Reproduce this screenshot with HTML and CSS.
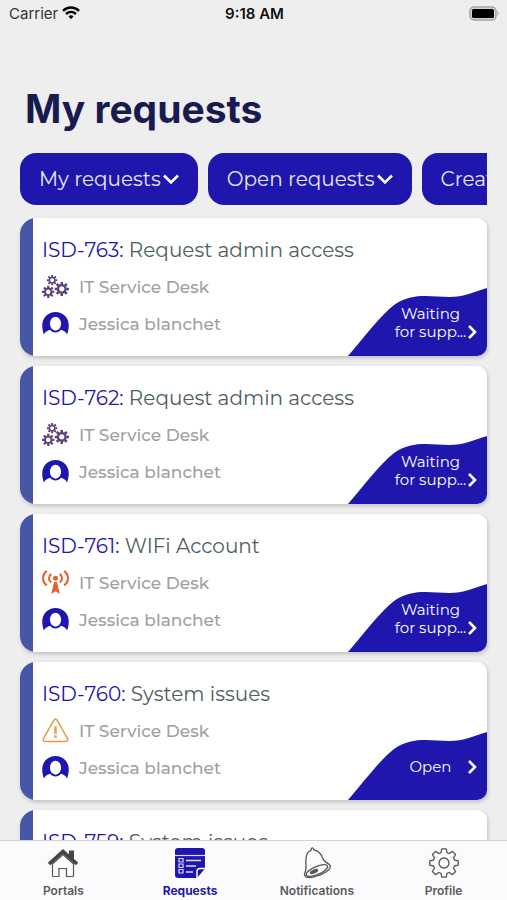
FILE: index.html
```html
<!DOCTYPE html>
<html lang="en">
<head>
<meta charset="utf-8">
<meta name="viewport" content="width=device-width, initial-scale=1">
<title>My requests</title>
<link rel="stylesheet" href="styles.css">
</head>
<body>
<svg class="sprite" aria-hidden="true">
  <symbol id="cog" viewBox="-8 -8 16 16">
    <circle r="4.2" fill="none" stroke="currentColor" stroke-width="2.6"/>
    <path d="M0-8V-5M0 5V8M-8 0H-5M5 0H8M-5.600-5.600-3.500-3.500M5.600 5.600 3.500 3.500M-5.600 5.600-3.500 3.500M5.600-5.600 3.500-3.500" stroke="currentColor" stroke-width="2.800"/>
  </symbol>
  <symbol id="cogs" viewBox="0 0 28 24">
    <use href="#cog" x="5" y="0" width="11" height="11"/>
    <use href="#cog" x="0" y="11" width="13" height="13"/>
    <use href="#cog" x="13" y="7" width="15" height="15"/>
  </symbol>
  <symbol id="antenna" viewBox="0 0 28 26">
    <circle cx="14" cy="8.500" r="2.600" fill="currentColor"/>
    <path d="M12.500 12.500H15.500L18.500 25 14 22 9.500 25Z" fill="currentColor"/>
    <path d="M9.500 4C6.500 6.500 6.500 10.500 9.500 13M18.500 4C21.500 6.500 21.500 10.500 18.500 13M5 1C-.2 5 -.2 12 5 16M23 1C28.200 5 28.200 12 23 16" fill="none" stroke="currentColor" stroke-width="2.200"/>
  </symbol>
  <symbol id="warning" viewBox="0 0 28 26">
    <path d="M12.500 2Q14 0 15.500 2L26.500 21.500Q27.500 24.500 24.500 24.500H3.500Q.5 24.500 1.500 21.500Z" fill="none" stroke="currentColor" stroke-width="1.600"/>
    <path d="M14 8.500V16.500M14 18V20.500" stroke="currentColor" stroke-width="2.600"/>
  </symbol>
  <symbol id="person" viewBox="0 0 28 24">
    <path d="M2 23.500C-1 15 0 8.500 4 4.300 9.500-1.200 18.500-1.200 24 4.300 28 8.500 29 15 26 23.500 25 20.500 22.500 19.500 19.500 18.500 17 22.200 11 22.200 8.500 18.500 5.500 19.500 3 20.500 2 23.500Z" fill="currentColor"/>
    <ellipse cx="14" cy="12.200" rx="5.800" ry="7.200" fill="#fff"/>
  </symbol>
  <symbol id="down" viewBox="0 0 16 12"><path d="M1 2.500 8 9.500 15 2.500" fill="none" stroke="currentColor" stroke-width="2.600"/></symbol>
  <symbol id="next" viewBox="0 0 10 16"><path d="M2 2 8 8 2 14" fill="none" stroke="currentColor" stroke-width="2.600"/></symbol>
  <symbol id="wave" viewBox="0 0 139 68" preserveAspectRatio="none"><path d="M0 68C18 47 32 28 46 17 64 4 84 9 101 9 116 9 126 4 139 0V68Z" fill="currentColor"/></symbol>
</svg>

<header class="status-bar">
  <span class="carrier">Carrier
    <svg class="wifi" viewBox="0 0 18 14" aria-hidden="true"><path d="M1 4.800C5.500.4 12.500.4 17 4.800M4 8C7 5.200 11 5.200 14 8" fill="none" stroke="#000" stroke-width="2.400"/><path d="M6.500 10.300Q9 8.300 11.500 10.300L9 13.200Z"/></svg>
  </span>
  <time class="clock">9:18 AM</time>
  <svg class="battery" viewBox="0 0 31 15" aria-label="Battery full" role="img"><rect x="1" y="1" width="26" height="13" rx="4" fill="#d5d5d5" stroke="#a5a5a5" stroke-width="1.500"/><rect x="3" y="3" width="22" height="9" rx="1.500"/><path d="M28.500 5Q31 7.500 28.500 10Z" fill="#a5a5a5"/></svg>
</header>

<main class="page">
  <h1 class="heading">My requests</h1>
  <div class="filters">
    <button class="filter" type="button">My requests<svg class="caret"><use href="#down"/></svg></button>
    <button class="filter" type="button">Open requests<svg class="caret"><use href="#down"/></svg></button>
    <button class="filter" type="button">Created<svg class="caret"><use href="#down"/></svg></button>
  </div>

  <div class="list">
    <article class="card">
      <div class="details">
        <h2 class="title"><span class="key">ISD-763:</span> Request admin access</h2>
        <p class="line"><svg class="icon purple"><use href="#cogs"/></svg>IT Service Desk</p>
        <p class="line"><svg class="icon blue"><use href="#person"/></svg>Jessica blanchet</p>
      </div>
      <a class="state" href="#isd-763"><svg class="wave"><use href="#wave"/></svg><span class="label">Waiting<br>for supp...</span><svg class="next low"><use href="#next"/></svg></a>
    </article>
    <article class="card">
      <div class="details">
        <h2 class="title"><span class="key">ISD-762:</span> Request admin access</h2>
        <p class="line"><svg class="icon purple"><use href="#cogs"/></svg>IT Service Desk</p>
        <p class="line"><svg class="icon blue"><use href="#person"/></svg>Jessica blanchet</p>
      </div>
      <a class="state" href="#isd-762"><svg class="wave"><use href="#wave"/></svg><span class="label">Waiting<br>for supp...</span><svg class="next low"><use href="#next"/></svg></a>
    </article>
    <article class="card">
      <div class="details">
        <h2 class="title"><span class="key">ISD-761:</span> WIFi Account</h2>
        <p class="line"><svg class="icon orange"><use href="#antenna"/></svg>IT Service Desk</p>
        <p class="line"><svg class="icon blue"><use href="#person"/></svg>Jessica blanchet</p>
      </div>
      <a class="state" href="#isd-761"><svg class="wave"><use href="#wave"/></svg><span class="label">Waiting<br>for supp...</span><svg class="next low"><use href="#next"/></svg></a>
    </article>
    <article class="card">
      <div class="details">
        <h2 class="title"><span class="key">ISD-760:</span> System issues</h2>
        <p class="line"><svg class="icon amber"><use href="#warning"/></svg>IT Service Desk</p>
        <p class="line"><svg class="icon blue"><use href="#person"/></svg>Jessica blanchet</p>
      </div>
      <a class="state" href="#isd-760"><svg class="wave"><use href="#wave"/></svg><span class="label">Open</span><svg class="next"><use href="#next"/></svg></a>
    </article>
    <article class="card">
      <div class="details">
        <h2 class="title"><span class="key">ISD-759:</span> System issues</h2>
      </div>
    </article>
  </div>
</main>

<nav class="tabs">
  <a class="tab" href="#portals">
    <svg class="tab-icon" viewBox="0 0 32 32" aria-hidden="true"><path d="M5.500 17V28.500Q5.500 29.500 6.500 29.500H12V21.500H19.500V29.500H25.500Q26.500 29.500 26.500 28.500V17L16 7.500Z" fill="#fff" stroke="#555" stroke-width="1.200"/><path d="M2 17 16 4.500 30 17" fill="none" stroke="#444" stroke-width="3.600"/><path d="M22 3.500H27V13L22 8.500Z" fill="#444"/></svg>
    Portals</a>
  <a class="tab active" href="#requests" aria-current="page">
    <svg class="tab-icon" viewBox="0 0 32 32" aria-hidden="true"><path d="M4 1H28Q31 1 31 4V21L22 31H4Q1 31 1 28V4Q1 1 4 1Z" fill="#1e16ad"/><g fill="none" stroke="#dcdcfa"><path d="M1 8.500H31" stroke-width="1.200"/><path d="M12 13.500H27M12 19H22M12 25H19" stroke-width="1.700"/><path d="M5 11.500H9V15H5ZM5 17H9V20.500H5ZM5 22.500H9V26H5Z" stroke-width="1.200"/></g><path d="M31 21.500H26Q23 21.500 23 24.500V31" fill="#1e16ad" stroke="#fbfbfd" stroke-width="1.500"/><path d="M31.500 24V32H24Z" fill="#fbfbfd"/></svg>
    Requests</a>
  <a class="tab" href="#notifications">
    <svg class="tab-icon" viewBox="0 0 32 32" aria-hidden="true"><g fill="none" stroke="#555" stroke-width="1.300"><path d="M3.500 26.500C7 21 3 14 6 7 7 4.500 8.500 4 10 3.500 10-.1 12.500.5 13 3 17 3.500 20.500 7 21.500 11 22.500 14.500 25 15 28.500 17.500 32 21 25 26 16 29 9 31.500 3 31 3.500 26.500Z"/><ellipse cx="16" cy="23.500" rx="11.500" ry="4" transform="rotate(-23 16 23.500)"/></g><ellipse cx="13" cy="24.500" rx="4.500" ry="2" transform="rotate(-23 13 24.500)" fill="#555"/></svg>
    Notifications</a>
  <a class="tab" href="#profile">
    <svg class="tab-icon" viewBox="-16 -16 32 32" aria-hidden="true"><g fill="none" stroke="#555" stroke-width="1.300" stroke-linejoin="round"><path d="M-3-10.400-2.200-14.200H2.200L3-10.400 5.200-9.500 8.500-11.600 11.600-8.500 9.500-5.200 10.400-3 14.200-2.200V2.200L10.400 3 9.500 5.200 11.600 8.500 8.500 11.600 5.200 9.500 3 10.400 2.200 14.200H-2.200L-3 10.400-5.200 9.500-8.500 11.600-11.600 8.500-9.500 5.200-10.400 3-14.200 2.200V-2.200L-10.400-3-9.500-5.200-11.600-8.500-8.500-11.600-5.200-9.500Z"/><circle r="5"/></g></svg>
    Profile</a>
</nav>
</body>
</html>
```
FILE: styles.css
```css
* { box-sizing: border-box; }

body {
  margin: 0;
  height: 100vh;
  display: flex;
  flex-direction: column;
  overflow: hidden;
  background: #eeeeee;
  color: #4d605d;
  font-family: Montserrat, Inter, sans-serif;
}

h1, h2, p { margin: 0; }
a { color: inherit; text-decoration: none; }
.sprite { position: absolute; width: 0; height: 0; }

.status-bar {
  display: grid;
  grid-template-columns: 1fr auto 1fr;
  align-items: center;
  height: 28px;
  padding: 0 7px 2px 9px;
  color: #111;
  font: 15px Inter, sans-serif;
  flex: none;
}
.carrier { display: flex; align-items: center; gap: 4px; color: #333; }
.wifi { width: 18px; height: 14px; }
.clock { font-weight: 600; }
.battery { width: 31px; height: 15px; justify-self: end; }

.page {
  flex: 1;
  min-height: 0;
  overflow: hidden;
  padding: 57px 20px 0;
}
.heading {
  padding-left: 5px;
  font: bold 39px/48px Inter, sans-serif;
  color: #191b50;
}

.filters {
  display: flex;
  gap: 10px;
  margin-top: 20px;
  overflow: hidden;
}
.filter {
  display: flex;
  align-items: center;
  gap: 2px;
  flex: none;
  height: 52px;
  padding: 0 19px;
  border: 0;
  border-radius: 16px;
  background: #1e16ad;
  color: #e8e8fa;
  font: 20px Montserrat, Inter, sans-serif;
}
.caret { width: 16px; height: 12px; color: #fff; }

.list { display: grid; gap: 10px; margin-top: 13px; }
.card {
  display: grid;
  min-height: 138px;
  padding-left: 13px;
  border-radius: 16px 10px 10px 16px;
  background: linear-gradient(to right, #4658a5 13px, #fff 13px);
  box-shadow: 1px 2px 4px rgba(0, 0, 0, 0.2);
}
.details { grid-area: 1 / 1; padding: 16px 9px 0; }
.title {
  margin-bottom: 2px;
  font-size: 20px;
  line-height: 32px;
  font-weight: 400;
}
.key { color: #1e16ad; }
.line {
  display: flex;
  align-items: center;
  gap: 10px;
  height: 37px;
  font-size: 17px;
  font-weight: 500;
  color: #a0a0a0;
}
.icon { width: 27px; height: 25px; }
.purple { color: #5d4279; }
.orange { color: #e0662d; }
.amber { color: #dda04e; }
.blue { color: #1e16ad; }

.state {
  grid-area: 1 / 1;
  place-self: end;
  position: relative;
  display: flex;
  align-items: center;
  width: 139px;
  height: 68px;
  padding: 1px 10px 0 46px;
  border-bottom-right-radius: 10px;
  overflow: hidden;
  color: #fff;
  font-size: 15px;
  line-height: 18px;
  text-align: center;
}
.wave { position: absolute; inset: 0; width: 100%; height: 100%; color: #1e16ad; }
.label { position: relative; flex: 1; white-space: nowrap; }
.next { position: relative; flex: none; width: 10px; height: 16px; }
.low { align-self: flex-end; margin-bottom: 16px; }

.tabs {
  display: grid;
  grid-template-columns: repeat(4, 1fr);
  height: 60px;
  flex: none;
  border-top: 1px solid #d4d4d6;
  background: #fbfbfd;
}
.tab {
  display: flex;
  flex-direction: column;
  align-items: center;
  gap: 3px;
  padding-top: 6px;
  color: #5a5a5a;
  font: 600 12px/18px Inter, sans-serif;
}
.tab-icon { width: 32px; height: 32px; }
.active { color: #1e16ad; font-weight: 700; }
```
